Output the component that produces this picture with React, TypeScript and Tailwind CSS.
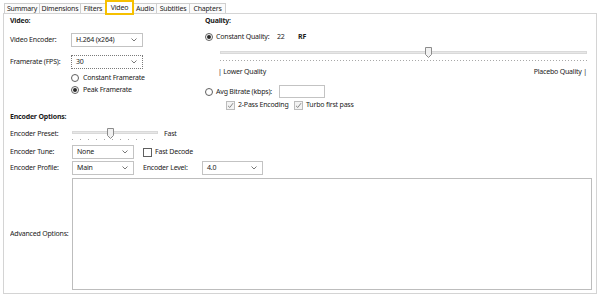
import React from "react";

const Chevron = () => (
  <svg width="6" height="4" viewBox="0 0 6 4" className="shrink-0">
    <path d="M0.5 0.5 L3 3 L5.5 0.5" fill="none" stroke="#555" strokeWidth="0.8" />
  </svg>
);

const Dropdown = ({ text, w, dotted }: { text: string; w: string; dotted?: boolean }) => (
  <div
    className={`${w} h-[14px] flex items-center justify-between pl-[4px] pr-[5px] bg-white ${
      dotted ? "border border-dotted border-[#7a7a7a]" : "border border-[#c3c3c3]"
    }`}
  >
    <span>{text}</span>
    <Chevron />
  </div>
);

const Radio = ({ checked }: { checked?: boolean }) => (
  <span className="w-[8px] h-[8px] rounded-full border border-[#5f5f5f] bg-white flex items-center justify-center shrink-0">
    {checked && <span className="w-[4px] h-[4px] rounded-full bg-[#2a2a2a]" />}
  </span>
);

const Check = ({ checked, dim }: { checked?: boolean; dim?: boolean }) => (
  <span
    className={`w-[9px] h-[9px] border flex items-center justify-center shrink-0 ${
      dim ? "border-[#bcbcbc] bg-[#f3f3f3]" : "border-[#5f5f5f] bg-white"
    }`}
  >
    {checked && (
      <svg width="7" height="7" viewBox="0 0 7 7">
        <path d="M1 3.8 L2.8 5.5 L6 1.2" fill="none" stroke="#8a8a8a" strokeWidth="1" />
      </svg>
    )}
  </span>
);

const Thumb = () => (
  <svg width="7" height="11" viewBox="0 0 7 11">
    <path d="M0.5 0.5 H6.5 V7.5 L3.5 10.5 L0.5 7.5 Z" fill="#f1f1f1" stroke="#8c8c8c" strokeWidth="1" />
  </svg>
);

const tabs = [
  { t: "Summary", w: "w-[36px]" },
  { t: "Dimensions", w: "w-[42px]" },
  { t: "Filters", w: "w-[26px]" },
  { t: "Video", w: "w-[29px]", sel: true },
  { t: "Audio", w: "w-[24px]" },
  { t: "Subtitles", w: "w-[34px]" },
  { t: "Chapters", w: "w-[37px]" },
];

export default function App() {
  return (
    <div className="w-[600px] h-[297px] bg-white text-[#1b1b1b] text-[7px] leading-[10px] tracking-[-0.2px] whitespace-nowrap font-['Noto_Sans',sans-serif] overflow-hidden">
      {/* Tabs */}
      <div className="flex items-end h-[13px] pl-[4px]">
        {tabs.map((tb) =>
          tb.sel ? (
            <div
              key={tb.t}
              className={`${tb.w} h-[15px] -mb-[2px] -ml-px relative z-10 bg-white border-2 border-[#f6c000] flex items-center justify-center`}
            >
              {tb.t}
            </div>
          ) : (
            <div
              key={tb.t}
              className={`${tb.w} h-[10px] bg-[#fbfbfb] border border-b-0 border-[#cfcfcf] -ml-px first:ml-0 flex items-center justify-center`}
            >
              {tb.t}
            </div>
          )
        )}
      </div>

      {/* Panel */}
      <div className="mx-[3px] h-[281px] border border-[#d4d4d4] pl-[6px]">
        {/* Top section */}
        <div className="flex">
          {/* Left column */}
          <div className="w-[195px]">
            <div className="mt-[2px] h-[10px] font-bold">Video:</div>
            <div className="mt-[7px] flex items-center h-[14px]">
              <span className="w-[61px]">Video Encoder:</span>
              <Dropdown text="H.264 (x264)" w="w-[72px]" />
            </div>
            <div className="mt-[8px] flex items-center h-[14px]">
              <span className="w-[61px]">Framerate (FPS):</span>
              <Dropdown text="30" w="w-[72px]" dotted />
            </div>
            <div className="mt-[4px] h-[10px] flex items-center pl-[61px] gap-[4px]">
              <Radio />
              <span>Constant Framerate</span>
            </div>
            <div className="mt-[2px] h-[10px] flex items-center pl-[61px] gap-[4px]">
              <Radio checked />
              <span>Peak Framerate</span>
            </div>
          </div>

          {/* Right column */}
          <div className="flex-1">
            <div className="mt-[2px] h-[10px] font-bold">Quality:</div>
            <div className="mt-[6px] h-[10px] flex items-center gap-[3px]">
              <Radio checked />
              <span className="w-[58px]">Constant Quality:</span>
              <span className="w-[18px]">22</span>
              <span className="font-bold">RF</span>
            </div>
            <div className="mt-[3px] ml-[15px] w-[367px] h-[18px] relative">
              <div className="absolute left-0 right-0 top-[6px] h-[3px] bg-[#e7e7e7] border border-[#d9d9d9]" />
              <div className="absolute left-[205px] top-[2px]">
                <Thumb />
              </div>
              <div className="absolute left-0 right-0 top-[15px] h-[1px] bg-[repeating-linear-gradient(90deg,#a8a8a8_0px,#a8a8a8_1px,transparent_1px,transparent_3px)]" />
            </div>
            <div className="mt-[4px] ml-[13px] w-[369px] h-[10px] flex justify-between">
              <span>| Lower Quality</span>
              <span>Placebo Quality |</span>
            </div>
            <div className="mt-[8px] h-[13px] flex items-center gap-[3px]">
              <Radio />
              <span className="w-[60px]">Avg Bitrate (kbps):</span>
              <span className="w-[46px] h-[13px] border border-[#c3c3c3] bg-white" />
            </div>
            <div className="mt-[2px] h-[10px] flex items-center pl-[21px]">
              <Check checked dim />
              <span className="ml-[3px] w-[56px]">2-Pass Encoding</span>
              <Check checked dim />
              <span className="ml-[3px]">Turbo first pass</span>
            </div>
          </div>
        </div>

        {/* Encoder options */}
        <div className="mt-[2px] h-[10px] font-bold">Encoder Options:</div>
        <div className="mt-[5px] h-[16px] flex items-start">
          <span className="w-[62px] mt-[2px]">Encoder Preset:</span>
          <div className="w-[86px] h-[16px] relative">
            <div className="absolute left-0 right-0 top-[4px] h-[3px] bg-[#e7e7e7] border border-[#d9d9d9]" />
            <div className="absolute left-[35px] top-[1px]">
              <Thumb />
            </div>
            <div className="absolute left-0 right-0 top-[12px] h-[1px] bg-[repeating-linear-gradient(90deg,#a8a8a8_0px,#a8a8a8_1px,transparent_1px,transparent_8px)]" />
          </div>
          <span className="ml-[6px] mt-[2px]">Fast</span>
        </div>
        <div className="mt-[2px] h-[14px] flex items-center">
          <span className="w-[62px]">Encoder Tune:</span>
          <Dropdown text="None" w="w-[62px]" />
          <span className="ml-[9px]">
            <Check />
          </span>
          <span className="ml-[3px]">Fast Decode</span>
        </div>
        <div className="mt-[2px] h-[14px] flex items-center">
          <span className="w-[62px]">Encoder Profile:</span>
          <Dropdown text="Main" w="w-[62px]" />
          <span className="ml-[9px] w-[59px]">Encoder Level:</span>
          <Dropdown text="4.0" w="w-[61px]" />
        </div>
        <div className="mt-[3px] h-[112px] flex items-center">
          <span className="w-[62px] overflow-hidden">Advanced Options:</span>
          <div className="w-[520px] h-[112px] border border-[#bdbdbd] bg-white" />
        </div>
      </div>
    </div>
  );
}
